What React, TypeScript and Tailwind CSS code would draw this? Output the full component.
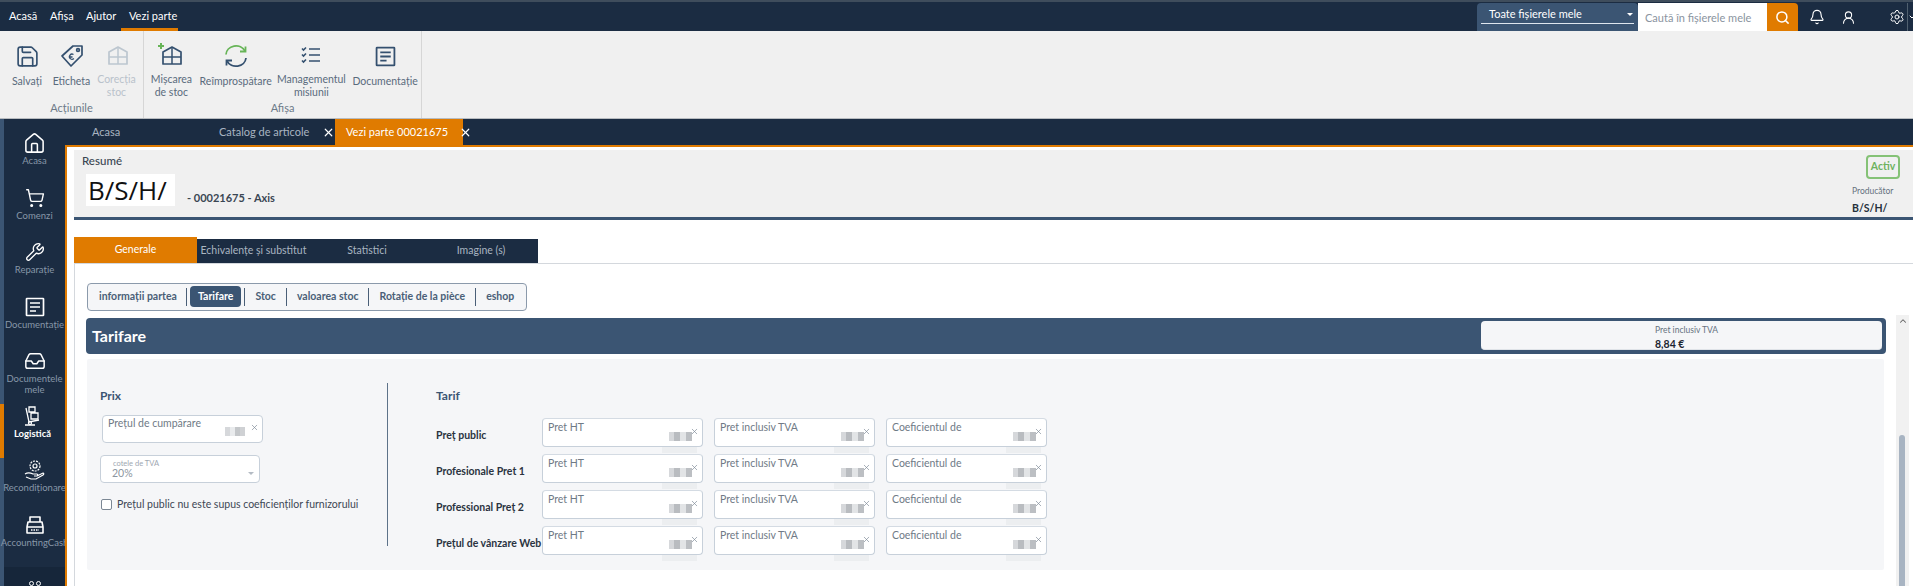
import React from "react";
import { Save, Home, ShoppingCart, Wrench, Inbox, Bell, Settings, Search, X, ChevronUp, ChevronDown, UserRound } from "lucide-react";

const navy = "bg-[#1b2c42]";

function RibbonBtn({ icon, lines, w, dim }: { icon: React.ReactNode; lines: string[]; w: string; dim?: boolean }) {
  return (
    <div className={`flex flex-col items-center ${w}`}>
      <div className="h-[40px] pt-[2px] flex items-center justify-center">{icon}</div>
      <div className={`text-[10.5px] leading-[13px] text-center whitespace-nowrap ${dim ? "text-[#b9c2cb]" : "text-[#5a6b7d]"}`}>
        {lines.map((l) => (
          <div key={l}>{l}</div>
        ))}
      </div>
    </div>
  );
}

function TagIcon() {
  return (
    <svg width="24" height="24" viewBox="0 0 24 24" fill="none" stroke="#34506f" strokeWidth="1.7">
      <path d="M2 12 13 2h9v9L11 22z" strokeLinejoin="round" />
      <circle cx="18" cy="6" r="1.4" />
      <path d="M13.5 10.5a2.6 2.6 0 1 0 .4 4M9 13h3.5" strokeWidth="1.3" />
    </svg>
  );
}

function StockIcon({ color, plus }: { color: string; plus?: boolean }) {
  return (
    <svg width="26" height="24" viewBox="0 0 26 24" fill="none" stroke={color} strokeWidth="1.7">
      <path d="M5 9 14 4l9 5v12H5z" strokeLinejoin="round" />
      <path d="M5 14h18M14 4v17" strokeWidth="1.5" />
      {plus && <path d="M3 0v6M0 3h6" stroke="#67b457" strokeWidth="2" />}
    </svg>
  );
}

function ChecklistIcon() {
  return (
    <svg width="20" height="18" viewBox="0 0 20 18" fill="none" stroke="#34506f" strokeWidth="1.6">
      <path d="M1 2.5l1.5 1.5L5 1.5M1 8.5 2.5 10 5 7.5M1 14.5 2.5 16 5 13.5" />
      <path d="M8 3h11M8 9h11M8 15h11" />
    </svg>
  );
}

function RefreshIcon() {
  return (
    <svg width="24" height="24" viewBox="0 0 24 24" fill="none" strokeWidth="1.8">
      <path d="M2 10.5A10 9 0 0 1 21 7" stroke="#67b457" />
      <path d="M16 7.5h5.5V2.5" stroke="#67b457" />
      <path d="M22 14a10 9 0 0 1-19 3" stroke="#34506f" />
      <path d="M8 16.5H2.5v5" stroke="#34506f" />
    </svg>
  );
}

function DocIcon({ color, size }: { color: string; size: number }) {
  return (
    <svg width={size} height={size} viewBox="0 0 20 20" fill="none" stroke={color} strokeWidth="1.7">
      <rect x="1.5" y="1.5" width="17" height="17" rx="0.5" />
      <path d="M5 6h10M5 10h10M5 14h6" />
    </svg>
  );
}

function Ribbon() {
  return (
    <div className="h-[88px] bg-[#f0f0f0] border-b border-[#b8bcc0] flex shrink-0">
      <div className="w-[144px] border-r border-[#d6d6d6] flex flex-col">
        <div className="flex pl-[5px] pt-[4px] h-[68px]">
          <RibbonBtn w="w-[44px]" lines={["Salvați"]} icon={<Save size={25} strokeWidth={1.6} color="#34506f" />} />
          <RibbonBtn w="w-[45px]" lines={["Eticheta"]} icon={<TagIcon />} />
          <RibbonBtn w="w-[45px]" dim lines={["Corecția", "stoc"]} icon={<StockIcon color="#bcc6cf" />} />
        </div>
        <div className="text-center text-[11px] text-[#6c7a88] mt-[1px]">Acțiunile</div>
      </div>
      <div className="w-[278px] border-r border-[#d6d6d6] flex flex-col">
        <div className="flex pl-[1px] pt-[4px] h-[68px]">
          <RibbonBtn w="w-[53px]" lines={["Mișcarea", "de stoc"]} icon={<StockIcon color="#34506f" plus />} />
          <RibbonBtn w="w-[76px]" lines={["Reîmprospătare"]} icon={<RefreshIcon />} />
          <RibbonBtn w="w-[76px]" lines={["Managementul", "misiunii"]} icon={<ChecklistIcon />} />
          <RibbonBtn w="w-[72px]" lines={["Documentație"]} icon={<DocIcon color="#34506f" size={21} />} />
        </div>
        <div className="text-center text-[11px] text-[#6c7a88] mt-[1px]">Afișa</div>
      </div>
    </div>
  );
}

function TopBar() {
  return (
    <div className={`h-[31px] ${navy} border-t-2 border-[#3f4d5c] flex items-end text-[11px] text-white shrink-0`}>
      <div className="flex items-center h-[29px]">
        <span className="ml-[9px] w-[41px]">Acasă</span>
        <span className="w-[36px]">Afișa</span>
        <span className="w-[35px]">Ajutor</span>
        <span className="h-full w-[57px] pl-[8px] flex items-center border-b-[3px] border-[#e07b00] pt-[2px]">Vezi parte</span>
      </div>
      <div className="ml-auto flex items-end h-[29px]">
        <div className="w-[161px] h-[28px] rounded-t bg-[#3b5573] px-[4px] pt-[2px]">
          <div className="h-[19px] border-b border-[#dfe6ee] flex items-center justify-between pl-[8px] pr-[1px]">
            <span>Toate fișierele mele</span>
            <span className="w-0 h-0 border-x-[3px] border-x-transparent border-t-[3px] border-t-white" />
          </div>
        </div>
        <div className="w-[129px] h-[28px] bg-white flex items-center pl-[7px] text-[#8a94a0] text-[11px] pt-[2px]">Caută în fișierele mele</div>
        <div className="w-[31px] h-[28px] bg-[#e07b00] rounded-tr flex items-center justify-center">
          <Search size={15} strokeWidth={2.4} color="#fff" />
        </div>
        <div className="w-[38px] h-[28px] flex items-center justify-center"><Bell size={16} strokeWidth={1.7} /></div>
        <div className="w-[24px] h-[28px] flex items-center justify-center"><UserRound size={15} strokeWidth={1.7} /></div>
        <div className="w-[47px] h-[28px] flex items-center justify-end pr-[2px]"><Settings size={16} strokeWidth={1.5} /></div>
        <div className="w-[6px] h-[28px] border-l border-[#50606f] flex items-center overflow-hidden">
          <ChevronDown size={8} strokeWidth={3} className="shrink-0" />
        </div>
      </div>
    </div>
  );
}

function LogisticsIcon() {
  return (
    <svg width="20" height="22" viewBox="0 0 20 22" fill="none" stroke="#fff" strokeWidth="1.3">
      <path d="M6 2h6v5H6zM8 8h7v6H8z" />
      <path d="M3 3l3 14 10-2M2 20h10" />
      <circle cx="7" cy="18" r="1.5" />
    </svg>
  );
}

function ReconIcon() {
  return (
    <svg width="24" height="22" viewBox="0 0 24 22" fill="none" stroke="#fff" strokeWidth="1.2">
      <circle cx="12" cy="7" r="5" strokeDasharray="2 1" />
      <circle cx="12" cy="7" r="2" />
      <path d="M2 15c3-2 6-1 8 0h4c1 0 1 2 0 2h-3m3 0 6-3c1 0 1 1 0 2l-7 4H8l-5-2" />
    </svg>
  );
}

function CashIcon() {
  return (
    <svg width="20" height="20" viewBox="0 0 20 20" fill="none" stroke="#fff" strokeWidth="1.6">
      <path d="M5 2h10v5H5zM3 7h14l1 5H2zM2 12h16v6H2z" strokeLinejoin="round" />
      <path d="M6 15h8" strokeDasharray="1.5 1" />
    </svg>
  );
}

function SideItem({ icon, lines, active }: { icon: React.ReactNode; lines: string[]; active?: boolean }) {
  return (
    <div className={`h-[56px] flex flex-col items-center ${active ? "border-l-[4px] border-[#e07b00] pr-[4px] -ml-[4px] w-[65px]" : ""}`}>
      <div className="h-[24px] flex items-center justify-center">{icon}</div>
      <div className={`text-[9.5px] leading-[11px] text-center whitespace-nowrap ${active ? "text-white font-bold" : "text-[#8797a8]"}`}>
        {lines.map((l) => (
          <div key={l}>{l}</div>
        ))}
      </div>
    </div>
  );
}

function Sidebar() {
  return (
    <div className={`w-[65px] shrink-0 ${navy} border-l-[4px] border-[#3b5573] flex flex-col pt-[12px]`}>
      <SideItem icon={<Home size={23} strokeWidth={1.6} color="#fff" />} lines={["Acasa"]} />
      <SideItem icon={<ShoppingCart size={20} strokeWidth={1.7} color="#fff" />} lines={["Comenzi"]} />
      <SideItem icon={<Wrench size={20} strokeWidth={1.6} color="#fff" />} lines={["Reparație"]} />
      <SideItem icon={<DocIcon color="#fff" size={20} />} lines={["Documentație"]} />
      <SideItem icon={<Inbox size={22} strokeWidth={1.6} color="#fff" />} lines={["Documentele", "mele"]} />
      <SideItem active icon={<LogisticsIcon />} lines={["Logistică"]} />
      <SideItem icon={<ReconIcon />} lines={["Recondiționare"]} />
      <SideItem icon={<CashIcon />} lines={["AccountingCash"]} />
      <div className="flex-1 bg-[#16263a] flex justify-center pt-[14px]">
        <span className="flex gap-[2px]">
          <span className="w-[5px] h-[5px] rounded-full border border-white" />
          <span className="w-[5px] h-[5px] rounded-full border border-white" />
        </span>
      </div>
    </div>
  );
}

function Blur() {
  return (
    <div className="absolute right-[10px] bottom-[5px] flex h-[9px]">
      <span className="w-[5px] bg-[#d6d8db]" />
      <span className="w-[6px] bg-[#b9bcc0]" />
      <span className="w-[6px] bg-[#e2e4e6]" />
      <span className="w-[6px] bg-[#bcbfc3]" />
    </div>
  );
}

function Field({ label }: { label: string }) {
  return (
    <div className="relative w-[161px] h-[29px] bg-white rounded-[4px] border border-[#c7d0da] border-t-[#d4dbe3] text-[10.5px] leading-[14px] text-[#6f7a86] pl-[5px] pt-[1px]">
      {label}
      <X size={9} strokeWidth={1.8} color="#7d8996" className="absolute right-[3px] top-[8px]" />
      <Blur />
      <div className="absolute right-[5px] -bottom-[7px] w-[35px] h-[6px] bg-[#eceef0]" />
    </div>
  );
}

function Row({ label }: { label: string }) {
  return (
    <div className="flex items-center h-[29px]">
      <div className="w-[106px] text-[10.5px] font-bold text-[#2a3340] pt-[6px] whitespace-nowrap">{label}</div>
      <div className="flex gap-[11px]">
        <Field label="Pret HT" />
        <Field label="Pret inclusiv TVA" />
        <Field label="Coeficientul de" />
      </div>
    </div>
  );
}

function Pricing() {
  return (
    <div className="mx-[12px] w-[1797px] h-[211px] mt-[5px] bg-[#f5f6f8] rounded-[2px] flex">
      <div className="w-[301px] h-[163px] mt-[24px] border-r-[1.5px] border-[#5d7289] pl-[13px]">
        <div className="text-[12px] font-bold text-[#3b5573] leading-[16px] mt-[5px]">Prix</div>
        <div className="relative w-[161px] h-[28px] ml-[2px] mt-[11px] bg-white rounded-[4px] border border-[#c7d0da] text-[10.5px] leading-[14px] text-[#6f7a86] pl-[5px]">
          Prețul de cumpărare
          <X size={9} strokeWidth={1.8} color="#7d8996" className="absolute right-[3px] top-[7px]" />
          <div className="absolute right-[17px] bottom-[6px] flex h-[9px]">
            <span className="w-[5px] bg-[#d6d8db]" />
            <span className="w-[5px] bg-[#e9ebed]" />
            <span className="w-[5px] bg-[#c4c7ca]" />
            <span className="w-[5px] bg-[#cfd1d4]" />
          </div>
        </div>
        <div className="relative w-[160px] h-[28px] mt-[12px] bg-white rounded-[4px] border border-[#c7d0da] pl-[12px] text-[#8b95a0]">
          <div className="text-[7.5px] leading-[9px] pt-[3px] text-[#a0a8b2]">cotele de TVA</div>
          <div className="text-[10.5px] leading-[11px] -ml-[1px]">20%</div>
          <span className="absolute right-[5px] top-[16px] w-0 h-0 border-x-[3px] border-x-transparent border-t-[3px] border-t-[#b4bbc4]" />
        </div>
        <div className="flex items-center mt-[14px] ml-[1px] text-[10.5px] text-[#3d4754]">
          <span className="w-[11px] h-[11px] bg-white border border-[#7b8794] rounded-[2px] mr-[5px]" />
          Prețul public nu este supus coeficienților furnizorului
        </div>
      </div>
      <div className="pl-[48px] pt-[29px]">
        <div className="text-[12px] font-bold text-[#3b5573] leading-[16px]">Tarif</div>
        <div className="flex flex-col gap-[7px] mt-[14px]">
          <Row label="Preț public" />
          <Row label="Profesionale Pret 1" />
          <Row label="Professional Preț 2" />
          <Row label="Prețul de vânzare Web" />
        </div>
      </div>
    </div>
  );
}

function Main() {
  return (
    <div className="flex-1 min-w-0 bg-white border-t-[2px] border-l-[2px] border-[#e07b00] relative">
      <div className="ml-[7px] mt-[3px] h-[70px] bg-[#f0f0f0] border-b-[3px] border-[#3b5573] flex justify-between">
        <div className="pl-[8px]">
          <div className="text-[11.5px] leading-[14px] text-[#3a4653] font-medium pt-[4px]">Resumé</div>
          <div className="flex items-end mt-[6px]">
            <div className="ml-[4px] w-[89px] h-[32px] bg-white text-[26px] leading-[32px] text-[#111] pl-[2px] font-['Open_Sans',sans-serif]">B/S/H/</div>
            <div className="ml-[12px] text-[11px] font-bold text-[#3a4653]">- 00021675 - Axis</div>
          </div>
        </div>
        <div className="w-[61px] flex flex-col">
          <div className="mt-[5px] ml-[14px] w-[34px] h-[24px] rounded-[4px] border-2 border-[#85c276] text-[10.5px] font-bold text-[#6eb25e] flex items-center justify-center">Activ</div>
          <div className="text-[8.5px] text-[#66727f] mt-[6px]">Producător</div>
          <div className="text-[10.5px] font-bold text-[#26303b] mt-[3px]">B/S/H/</div>
        </div>
      </div>
      <div className="ml-[7px] mt-[17px] flex items-end h-[26px] text-[10.5px]">
        <div className="w-[123px] h-[26px] bg-[#e07b00] text-white flex items-center justify-center">Generale</div>
        <div className="w-[341px] h-[24px] bg-[#1b2c42] text-[#aab5c1] flex">
          <div className="w-[113px] flex items-center justify-center">Echivalențe și substitut</div>
          <div className="w-[114px] flex items-center justify-center">Statistici</div>
          <div className="w-[114px] flex items-center justify-center">Imagine (s)</div>
        </div>
      </div>
      <div className="ml-[7px] h-[323px] border-l border-t border-[#d4d8dd] relative">
        <div className="pt-[18px] pl-[12px]">
          <div className="inline-flex items-center h-[28px] border-[1.5px] border-[#8b9aab] rounded-[4px] bg-[#f5f6f8] text-[10.5px] font-bold text-[#4a5f77] px-[2px]">
            <span className="px-[9px]">informații partea</span>
            <span className="w-px h-[18px] bg-[#4a5f77]" />
            <span className="mx-[3px] px-[8px] h-[21px] rounded-[4px] bg-[#3b5573] text-white flex items-center">Tarifare</span>
            <span className="w-px h-[18px] bg-[#4a5f77]" />
            <span className="px-[10px]">Stoc</span>
            <span className="w-px h-[18px] bg-[#4a5f77]" />
            <span className="px-[10px]">valoarea stoc</span>
            <span className="w-px h-[18px] bg-[#4a5f77]" />
            <span className="px-[10px]">Rotație de la pièce</span>
            <span className="w-px h-[18px] bg-[#4a5f77]" />
            <span className="px-[10px]">eshop</span>
          </div>
        </div>
        <div className="ml-[11px] mt-[7px] w-[1800px] h-[36px] rounded-[4px] bg-[#3b5573] flex items-center justify-between pr-[4px]">
          <span className="pl-[6px] text-[16px] font-bold text-white">Tarifare</span>
          <div className="w-[401px] h-[29px] rounded-[4px] bg-[#f5f6f8] pl-[174px] border-b border-[#dfe3e8]">
            <div className="text-[8.5px] leading-[12px] pt-[3px] text-[#66727f]">Pret inclusiv TVA</div>
            <div className="text-[10.5px] leading-[12px] font-bold text-[#1d2631] mt-[2px]">8,84 €</div>
          </div>
        </div>
        <Pricing />
        <div className="absolute left-[1821px] top-[51px] w-[13px] h-[280px] bg-[#f1f1f1]">
          <ChevronUp size={10} strokeWidth={2.5} color="#606060" className="mx-auto mt-[1px]" />
          <div className="absolute left-[3px] top-[120px] w-[6px] h-[170px] rounded-t-full bg-[#a8b4c2]" />
        </div>
      </div>
    </div>
  );
}

function TabsBar() {
  return (
    <div className={`h-[26px] ${navy} flex text-[11px] shrink-0`}>
      <div className="w-[127px] flex items-center text-[#a9b4c1] pl-[27px] whitespace-nowrap">Acasa</div>
      <div className="w-[143px] flex items-center pl-[27px] text-[#a9b4c1] whitespace-nowrap">
        Catalog de articole
        <X size={13} strokeWidth={2.2} color="#fff" className="ml-[13px] shrink-0" />
      </div>
      <div className="w-[128px] bg-[#e07b00] text-white flex items-center pl-[11px] whitespace-nowrap">
        Vezi parte 00021675
        <X size={13} strokeWidth={2.2} color="#fff" className="ml-[11px] shrink-0" />
      </div>
    </div>
  );
}

export default function App() {
  return (
    <div className="w-[1913px] h-[586px] overflow-hidden flex flex-col bg-white font-['Lato','Noto_Sans',sans-serif]">
      <TopBar />
      <Ribbon />
      <div className="flex flex-1 min-h-0">
        <Sidebar />
        <div className="flex-1 min-w-0 flex flex-col">
          <TabsBar />
          <Main />
        </div>
      </div>
    </div>
  );
}
